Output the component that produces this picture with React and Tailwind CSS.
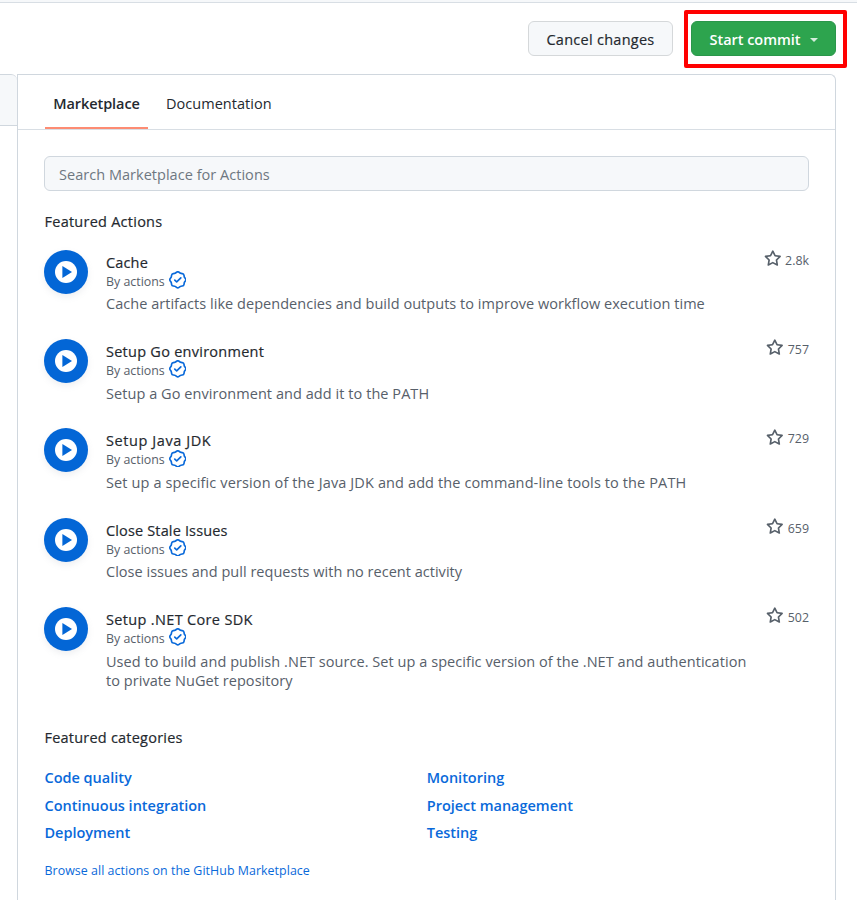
import React from "react";

const actions = [
  { name: "Cache", stars: "2.8k", title: "tracking-[0.15px]", tracking: "tracking-[0.035px]", text: "Cache artifacts like dependencies and build outputs to improve workflow execution time" },
  { name: "Setup Go environment", stars: "757", title: "tracking-[0.26px]", tracking: "tracking-[0.06px]", text: "Setup a Go environment and add it to the PATH" },
  { name: "Setup Java JDK", stars: "729", title: "tracking-[0.58px]", tracking: "tracking-[0.12px]", text: "Set up a specific version of the Java JDK and add the command-line tools to the PATH" },
  { name: "Close Stale Issues", stars: "659", title: "tracking-[0.15px]", tracking: "tracking-[0.02px]", text: "Close issues and pull requests with no recent activity" },
  { name: "Setup .NET Core SDK", stars: "502", title: "tracking-[0.34px]", tracking: "tracking-[0.05px]", text: "Used to build and publish .NET source. Set up a specific version of the .NET and authentication to private NuGet repository" },
];

const categories = ["Code quality", "Monitoring", "Continuous integration", "Project management", "Deployment", "Testing"];

function PlayBadge() {
  return (
    <div className="flex size-[44px] shrink-0 items-center justify-center rounded-full bg-[#0366d6] shadow-[0_3px_6px_rgba(140,149,159,0.15)]">
      <svg width="22" height="22" viewBox="0 0 22 22">
        <circle cx="11" cy="11" r="11" fill="#fff" />
        <path d="M7.4 4.9v12.2L17 11z" fill="#0366d6" />
      </svg>
    </div>
  );
}

function Verified() {
  return (
    <svg width="17.6" height="17.6" viewBox="0 0 16 16" fill="#0969da" className="shrink-0">
      <path fillRule="evenodd" d="M9.585.52a2.678 2.678 0 0 0-3.17 0l-.928.68a1.178 1.178 0 0 1-.518.215L3.83 1.59a2.678 2.678 0 0 0-2.24 2.24l-.175 1.14a1.178 1.178 0 0 1-.215.518l-.68.928a2.678 2.678 0 0 0 0 3.17l.68.928c.113.153.186.33.215.518l.175 1.138a2.678 2.678 0 0 0 2.24 2.24l1.138.175c.187.029.365.102.518.215l.928.68a2.678 2.678 0 0 0 3.17 0l.928-.68a1.17 1.17 0 0 1 .518-.215l1.138-.175a2.678 2.678 0 0 0 2.241-2.241l.175-1.138c.029-.187.102-.365.215-.518l.68-.928a2.678 2.678 0 0 0 0-3.17l-.68-.928a1.179 1.179 0 0 1-.215-.518L14.41 3.83a2.678 2.678 0 0 0-2.24-2.24l-1.138-.175a1.179 1.179 0 0 1-.518-.215L9.585.52ZM7.303 1.728c.415-.305.98-.305 1.394 0l.928.68c.348.256.752.423 1.18.489l1.136.174c.51.078.909.478.987.987l.174 1.137c.066.427.233.831.489 1.18l.68.927c.305.415.305.98 0 1.394l-.68.928a2.678 2.678 0 0 0-.489 1.18l-.174 1.136a1.178 1.178 0 0 1-.987.987l-1.137.174a2.678 2.678 0 0 0-1.18.489l-.927.68c-.415.305-.98.305-1.394 0l-.928-.68a2.678 2.678 0 0 0-1.18-.489l-1.136-.174a1.178 1.178 0 0 1-.987-.987l-.174-1.137a2.678 2.678 0 0 0-.489-1.18l-.68-.927a1.178 1.178 0 0 1 0-1.394l.68-.928c.256-.348.423-.752.489-1.18l.174-1.136c.078-.51.478-.909.987-.987l1.137-.174a2.678 2.678 0 0 0 1.18-.489l.927-.68ZM11.28 6.78a.75.75 0 0 0-1.06-1.06L7 8.94 5.78 7.72a.75.75 0 0 0-1.06 1.06l1.75 1.75a.75.75 0 0 0 1.06 0l3.75-3.75Z" />
    </svg>
  );
}

function Star() {
  return (
    <svg width="17.6" height="17.6" viewBox="0 0 16 16" fill="#57606a" className="shrink-0">
      <path fillRule="evenodd" d="M8 .25a.75.75 0 0 1 .673.418l1.882 3.815 4.21.612a.75.75 0 0 1 .416 1.279l-3.046 2.97.719 4.192a.75.75 0 0 1-1.088.791L8 12.347l-3.766 1.98a.75.75 0 0 1-1.088-.79l.72-4.194L.818 6.374a.75.75 0 0 1 .416-1.28l4.21-.611L7.327.668A.75.75 0 0 1 8 .25Zm0 2.445L6.615 5.5a.75.75 0 0 1-.564.41l-3.097.45 2.24 2.184a.75.75 0 0 1 .216.664l-.528 3.084 2.769-1.456a.75.75 0 0 1 .698 0l2.77 1.456-.53-3.084a.75.75 0 0 1 .216-.664l2.24-2.183-3.096-.45a.75.75 0 0 1-.564-.41L8 2.694Z" />
    </svg>
  );
}

function ActionRow({ name, stars, text, title, tracking }) {
  return (
    <li className="flex h-[89.3px]">
      <PlayBadge />
      <div className="ml-[18px] w-[650px] pt-[3px]">
        <h4 className={"text-[14.5px] leading-[20px] text-[#24292f] [-webkit-text-stroke:0.18px] " + title}>{name}</h4>
        <div className="flex h-[18px] items-center gap-[4px] text-[12.4px] text-[#57606a]">
          <span className="leading-[18px]">By actions</span>
          <span className="-mt-[4px]"><Verified /></span>
        </div>
        <p className={"mt-[3.7px] text-[14.5px] leading-[19px] text-[#57606a] " + tracking}>{text}</p>
      </div>
      <div className="ml-auto flex h-[20px] items-center gap-[3.7px] text-[12.4px] text-[#57606a]">
        <span className="-mt-[2px]"><Star /></span>
        <span className="mt-[2.6px]">{stars}</span>
      </div>
    </li>
  );
}

export default function App() {
  return (
    <div className="flex h-[900px] w-[857px] flex-col overflow-hidden bg-white font-['Open_Sans','Noto_Sans',sans-serif] text-[14.5px] text-[#24292f]">
      <div className="h-[3px] shrink-0 border-b border-[#d8dee4] bg-[#f6f8fa]" />
      <header className="flex h-[71px] shrink-0 items-start justify-end pt-[7px] pr-[10px]">
        <button className="mt-[11px] mr-[11px] h-[35px] w-[145px] rounded-[6px] border border-[#d5d8da] bg-[#f6f8fa] pt-[2px] tracking-[0.27px] [-webkit-text-stroke:0.18px]">Cancel changes</button>
        <div className="h-[58px] w-[163px] rounded-[2px] border-4 border-[#ff0000] pt-[7px] pl-[3px]">
          <button className="flex h-[35px] w-[145px] items-center justify-center gap-[9px] rounded-[6px] border border-[#2a964a] bg-[#2da44e] pt-[2px] font-semibold text-white">
            <span className="tracking-[-0.03px]">Start commit</span>
            <span className="border-x-[4.5px] border-t-[4.5px] border-x-transparent border-t-white/80" />
          </button>
        </div>
      </header>
      <main className="flex min-h-0 flex-1">
        <div className="w-[17px] shrink-0">
          <div className="h-[52px] rounded-tr-[6px] border-y border-[#d0d7de] bg-[#f6f8fa]" />
        </div>
        <section className="w-[819px] rounded-tr-[6px] border-x border-t border-[#d0d7de]">
          <nav className="flex h-[55px] border-b border-[#d8dee4] pl-[27px]">
            <div className="flex h-[54px] w-[103px] items-center justify-center border-b-2 border-[#fd8c73] pt-[5px] font-semibold tracking-[-0.08px]">Marketplace</div>
            <div className="ml-[18px] flex h-[54px] items-center pt-[3px] tracking-[0.03px]">Documentation</div>
          </nav>
          <div className="px-[26px]">
            <input placeholder="Search Marketplace for Actions" className="mt-[26px] block h-[35px] w-[765px] rounded-[6px] border border-[#d0d7de] bg-[#f6f8fa] px-[14px] pt-[2px] tracking-[0.03px] placeholder:text-[#6e7781]" />
            <h3 className="mt-[20px] pl-[0.5px] leading-[22px] tracking-[0.25px] [-webkit-text-stroke:0.18px]">Featured Actions</h3>
            <ul className="mt-[16.8px]">
              {actions.map((a) => <ActionRow key={a.name} {...a} />)}
            </ul>
            <h3 className="mt-[31px] pl-[0.5px] leading-[22px] tracking-[0.22px] [-webkit-text-stroke:0.18px]">Featured categories</h3>
            <div className="mt-[18px] grid grid-cols-2 pl-[0.5px] font-semibold tracking-[-0.02px] text-[#0969da]">
              {categories.map((c) => <a key={c} className="h-[27.5px] leading-[22px]">{c}</a>)}
            </div>
            <a className="mt-[11px] block pl-[0.5px] text-[12.4px] leading-[20px] tracking-[0.05px] text-[#0969da]">Browse all actions on the GitHub Marketplace</a>
          </div>
        </section>
      </main>
    </div>
  );
}
